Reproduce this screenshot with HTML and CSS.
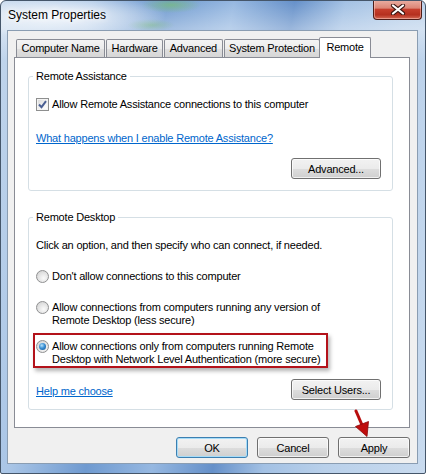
FILE: index.html
```html
<!DOCTYPE html>
<html lang="en">
<head>
    <meta charset="UTF-8">
    <title>System Properties</title>
    <link rel="stylesheet" href="styles.css">
</head>
<body>
    <div class="window">
        <div class="titlebar">
            <span class="title">System Properties</span>
            <span class="close-btn">
                <svg width="16" height="11" viewBox="0 0 16 11">
                    <path d="M3 1.5 L13 9.5 M13 1.5 L3 9.5" stroke="#3b1612" stroke-width="4.2" stroke-linecap="round"/>
                    <path d="M3 1.5 L13 9.5 M13 1.5 L3 9.5" stroke="#ffffff" stroke-width="2.2" stroke-linecap="round"/>
                </svg>
            </span>
        </div>
        <div class="client">
            <div class="tabs">
                <div class="tab">Computer Name</div>
                <div class="tab">Hardware</div>
                <div class="tab">Advanced</div>
                <div class="tab">System Protection</div>
                <div class="tab active">Remote</div>
            </div>
            <div class="panel">
                <fieldset class="group group-assist">
                    <legend>Remote Assistance</legend>
                    <div class="check-row">
                        <span class="checkbox">
                            <svg width="11" height="11" viewBox="0 0 11 11">
                                <path d="M2 5.5 L4.5 8.2 L9 2.2" fill="none" stroke="#4a5f93" stroke-width="2"/>
                            </svg>
                        </span>
                        <span>Allow Remote Assistance connections to this computer</span>
                    </div>
                    <a class="link" href="#">What happens when I enable Remote Assistance?</a>
                    <div class="btn-row">
                        <button class="btn">Advanced...</button>
                    </div>
                </fieldset>
                <fieldset class="group group-desktop">
                    <legend>Remote Desktop</legend>
                    <p class="hint">Click an option, and then specify who can connect, if needed.</p>
                    <div class="option">
                        <span class="radio"></span>
                        <span>Don't allow connections to this computer</span>
                    </div>
                    <div class="option">
                        <span class="radio"></span>
                        <span>Allow connections from computers running any version of<br>Remote Desktop (less secure)</span>
                    </div>
                    <div class="option highlight">
                        <span class="radio checked"></span>
                        <span>Allow connections only from computers running Remote<br>Desktop with Network Level Authentication (more secure)</span>
                    </div>
                    <div class="btn-row split">
                        <a class="link" href="#">Help me choose</a>
                        <button class="btn">Select Users...</button>
                    </div>
                </fieldset>
            </div>
            <div class="dialog-buttons">
                <button class="btn btn-small default">OK</button>
                <button class="btn btn-small">Cancel</button>
                <button class="btn btn-small">Apply</button>
            </div>
        </div>
        <!-- annotation arrow pointing at Apply -->
        <svg class="arrow" width="26" height="32" viewBox="0 0 26 32">
            <path d="M6 3 L12 17" stroke="#b80d0d" stroke-width="3" stroke-linecap="round"/>
            <polygon points="17,28.5 5.5,18.5 18.5,13.5" fill="#c00d0d" stroke="#8a0707" stroke-width="0.8"/>
        </svg>
    </div>
</body>
</html>
```

FILE: styles.css
```css
* {
    box-sizing: border-box;
}
body {
    margin: 0;
    font-family: "Liberation Sans", Arial, sans-serif;
    font-size: 11px;
    letter-spacing: -0.2px;
    color: #000;
    background: #fff;
}
.window {
    position: relative;
    width: 426px;
    height: 474px;
    border: 1px solid #45566a;
    border-radius: 6px 6px 2px 2px;
    overflow: hidden;
    background:
        radial-gradient(ellipse 110px 22px at 55px 15px, rgba(255, 255, 255, 0.85), rgba(255, 255, 255, 0)),
        radial-gradient(ellipse 30px 8px at 170px 4px, rgba(120, 190, 120, 0.7), rgba(120, 190, 120, 0)),
        radial-gradient(ellipse 24px 6px at 150px 24px, rgba(130, 190, 130, 0.5), rgba(130, 190, 130, 0)),
        linear-gradient(to bottom, rgba(255, 255, 255, 0) 0, rgba(255, 255, 255, 0.35) 28px, rgba(255, 255, 255, 0) 60px),
        linear-gradient(100deg, #c2d6ec 0%, #a9c5e6 18%, #6f9ad0 33%, #96b8e1 46%, #6590c9 58%, #a3c1e4 68%, #b9d0ea 80%, #c9dbef 100%);
}
.titlebar {
    display: flex;
    justify-content: space-between;
    align-items: flex-start;
    height: 29px;
    padding-left: 7px;
}
.title {
    margin-top: 6px;
    line-height: 16px;
    font-size: 12px;
    letter-spacing: 0;
    text-shadow: 0 0 6px #fff, 0 0 10px #fff;
}
.close-btn {
    display: flex;
    align-items: center;
    justify-content: center;
    width: 49px;
    height: 20px;
    margin: -1px 3px 0 0;
    border: 1px solid #4e1d18;
    border-top: none;
    border-radius: 0 0 4px 4px;
    background: linear-gradient(#eab0a4 0%, #dc8676 42%, #c63e2c 50%, #b5301f 78%, #d46a55 100%);
    box-shadow: inset 0 0 0 1px rgba(255, 210, 200, 0.5);
}
.client {
    margin: 0 7px 0 6px;
    height: 434px;
    border: 1px solid #8a9db2;
    background: #f0f0f0;
    padding: 6px 7px 0 6px;
}
.tabs {
    display: flex;
    align-items: flex-end;
    height: 20px;
    padding-left: 2px;
}
.tab {
    height: 18px;
    line-height: 17px;
    padding: 0 4.5px;
    margin-right: 1px;
    border: 1px solid #898c95;
    border-bottom: none;
    border-radius: 2px 2px 0 0;
    white-space: nowrap;
    background: linear-gradient(#f4f4f4, #ececec 50%, #e0e0e0 51%, #d6d6d6);
}
.tab.active {
    position: relative;
    z-index: 1;
    height: 21px;
    line-height: 18px;
    margin: 0 -2px -1px;
    padding: 0 6px;
    background: #fff;
}
.panel {
    height: 371px;
    border: 1px solid #898c95;
    background: #fff;
    padding: 11px 16px 0 13px;
}
.group {
    margin: 0;
    border: 1px solid #d5dfe5;
    border-radius: 3px;
    padding: 15px 11px 11px 7px;
}
.group legend {
    padding: 0 3px;
    margin-left: -3px;
    line-height: 14px;
}
.group + .group {
    margin-top: 19px;
}
.group-desktop {
    padding-bottom: 9px;
}
.check-row {
    display: flex;
    align-items: center;
    gap: 3px;
    line-height: 13px;
}
.checkbox {
    display: flex;
    align-items: center;
    justify-content: center;
    width: 13px;
    height: 13px;
    border: 1px solid #8e8f8f;
    background: linear-gradient(135deg, #d8d8d8, #f4f4f4 60%, #fff);
    box-shadow: inset 0 0 0 1px #f4f4f4;
}
.link {
    display: block;
    width: fit-content;
    margin-top: 21px;
    line-height: 13px;
    color: #0066cc;
    text-decoration: underline;
}
.btn-row {
    display: flex;
    justify-content: flex-end;
    margin-top: 13px;
}
.btn-row.split {
    justify-content: space-between;
    align-items: center;
    margin-top: 11px;
}
.btn-row.split .link {
    margin-top: 3px;
}
.btn {
    width: 90px;
    height: 21px;
    padding: 0;
    border: 1px solid #707070;
    border-radius: 3px;
    font: inherit;
    letter-spacing: inherit;
    color: #000;
    background: linear-gradient(#f2f2f2, #ebebeb 50%, #dddddd 51%, #cfcfcf);
    box-shadow: inset 0 0 0 1px rgba(255, 255, 255, 0.7);
}
.btn-small {
    width: 72px;
}
.btn.default {
    border-color: #3c7fb1;
    box-shadow: inset 0 0 0 1px #a6dcf8;
}
.hint {
    margin: 0;
    line-height: 13px;
}
.option {
    display: flex;
    align-items: flex-start;
    gap: 3px;
    margin-top: 18px;
    line-height: 13px;
    white-space: nowrap;
}
.radio {
    flex: none;
    position: relative;
    width: 13px;
    height: 13px;
    border: 1px solid #8f9091;
    border-radius: 50%;
    background: radial-gradient(circle at 60% 65%, #fafafa, #e2e2e2 55%, #c9c9c9);
}
.radio.checked::after {
    content: "";
    position: absolute;
    left: 2px;
    top: 2px;
    width: 7px;
    height: 7px;
    border-radius: 50%;
    background: radial-gradient(circle at 40% 35%, #b7e3fb, #3a8fd4 45%, #0f4d8a);
}
.option.highlight {
    width: 295px;
    margin: 6px 0 0 -3px;
    padding: 5px 3px 0 1px;
    border: 2px solid #b3121a;
    box-shadow: 2px 3px 4px rgba(0, 0, 0, 0.3);
}
.dialog-buttons {
    display: flex;
    justify-content: flex-end;
    gap: 9px;
    margin-top: 9px;
}
.arrow {
    position: absolute;
    left: 349px;
    top: 407px;
}
```
